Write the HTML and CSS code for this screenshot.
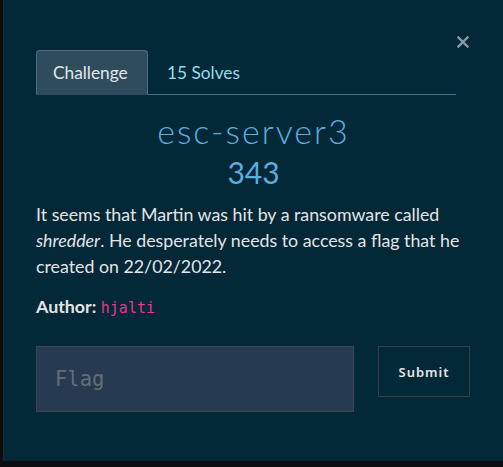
FILE: index.html
```html
<!DOCTYPE html>
<html>
<head>
<meta charset="utf-8">
<link rel="stylesheet" href="styles.css">
</head>
<body>
<div class="modal">
  <div class="modal-top">
    <button class="close" aria-label="Close">
      <svg width="12" height="12" viewBox="0 0 12 12"><path d="M1.5 1.5 L10.5 10.5 M10.5 1.5 L1.5 10.5" stroke="#8a9aa4" stroke-width="2.4" stroke-linecap="square"/></svg>
    </button>
  </div>
  <nav class="tabs">
    <a class="tab active">Challenge</a>
    <a class="tab">15 Solves</a>
  </nav>
  <h2 class="title">esc-server3</h2>
  <h3 class="value">343</h3>
  <p class="desc">It seems that Martin was hit by a ransomware called <em>shredder</em>. He desperately needs to access a flag that he created on 22/02/2022.</p>
  <p class="author"><strong>Author:</strong> <code>hjalti</code></p>
  <form class="submit-row">
    <input class="flag-input" type="text" placeholder="Flag">
    <button class="submit-btn" type="button">Submit</button>
  </form>
</div>
</body>
</html>
```
FILE: styles.css
```css
html, body {
  margin: 0;
  padding: 0;
  background: #0c0d0e;
  overflow: hidden;
}
body {
  font-family: Lato, "Open Sans", sans-serif;
  color: #e4e4e4;
}
.modal {
  margin-left: 3px;
  width: 500px;
  height: 461px;
  box-sizing: border-box;
  background: #032838;
  border-left: 1px solid #1e2a30;
  padding: 32px 32px 0 32px;
}
.modal-top {
  display: flex;
  justify-content: flex-end;
  height: 18px;
  padding-right: 2px;
}
.close {
  background: none;
  border: 0;
  padding: 0;
  margin-top: 4px;
  width: 12px;
  height: 12px;
  display: block;
}
.close svg { display: block; }
.tabs {
  display: flex;
  margin-right: 15px;
  border-bottom: 1px solid #4b6e86;
  height: 44px;
}
.tab {
  font-size: 17.3px;
  line-height: 20px;
  padding: 12px 17px 12px 18px;
  color: #93dcea;
  border: 1px solid transparent;
  border-radius: 4px 4px 0 0;
  margin-bottom: -1px;
}
.tab.active {
  width: 112px;
  box-sizing: border-box;
  background: #2f4c5d;
  border-color: #4b6e86;
  border-bottom-color: #2f4c5d;
  color: #e2e6e8;
  padding-left: 16px;
}
.title {
  margin: 15px 0 0 0;
  text-align: center;
  font-weight: 300;
  font-size: 34px;
  line-height: 42px;
  letter-spacing: 2px;
  color: #5badde;
}
.value {
  margin: 2px 0 0 0;
  text-align: center;
  font-weight: 400;
  font-size: 30px;
  line-height: 36px;
  color: #5badde;
}
.desc {
  margin: 11px 0 0 0;
  font-size: 17.8px;
  line-height: 26px;
  color: #e4e4e4;
}
.author {
  margin: 14px 0 0 0;
  font-size: 17.8px;
  line-height: 26px;
}
.author strong { font-weight: 700; }
.author code {
  font-family: "DejaVu Sans Mono", monospace;
  font-size: 15px;
  color: #e0398d;
}
.submit-row {
  display: flex;
  align-items: flex-start;
  margin-top: 25px;
}
.flag-input {
  width: 318px;
  height: 66px;
  box-sizing: border-box;
  background: #263a51;
  border: 1px solid #3c4650;
  padding: 0 18px;
  font-family: "DejaVu Sans Mono", monospace;
  font-size: 20.5px;
  color: #e4e4e4;
  outline: none;
}
.flag-input::placeholder { color: #646e78; }
.submit-btn {
  margin-left: 24px;
  width: 92px;
  height: 51px;
  box-sizing: border-box;
  background: transparent;
  border: 1px solid #383d41;
  color: #e6e6e6;
  font-family: "Noto Sans", Lato, sans-serif;
  font-weight: 600;
  font-size: 13px;
  letter-spacing: 1px;
}
```
